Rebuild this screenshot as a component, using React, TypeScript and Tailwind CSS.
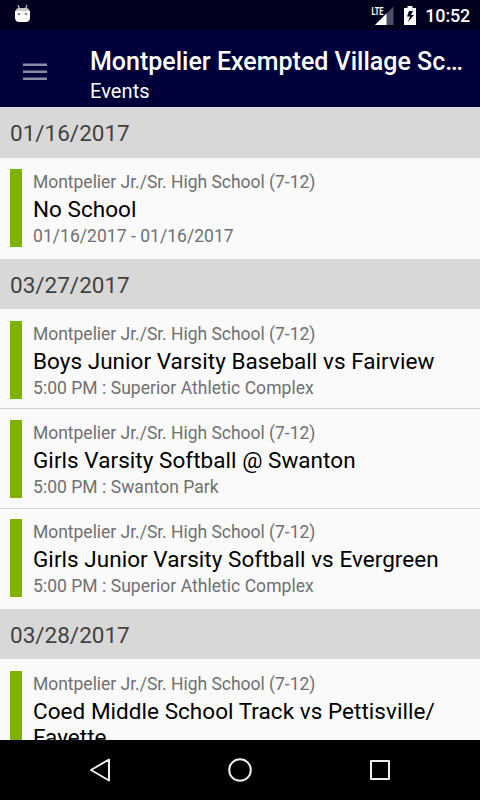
type EventItem = {
    school: string;
    title: string;
    detail: string;
};

type EventGroup = {
    date: string;
    events: EventItem[];
};

const SCHOOL = "Montpelier Jr./Sr. High School (7-12)";

const GROUPS: EventGroup[] = [
    {
        date: "01/16/2017",
        events: [{ school: SCHOOL, title: "No School", detail: "01/16/2017 - 01/16/2017" }],
    },
    {
        date: "03/27/2017",
        events: [
            { school: SCHOOL, title: "Boys Junior Varsity Baseball vs Fairview", detail: "5:00 PM : Superior Athletic Complex" },
            { school: SCHOOL, title: "Girls Varsity Softball @ Swanton", detail: "5:00 PM : Swanton Park" },
            { school: SCHOOL, title: "Girls Junior Varsity Softball vs Evergreen", detail: "5:00 PM : Superior Athletic Complex" },
        ],
    },
    {
        date: "03/28/2017",
        // zero-width space lets the title wrap after the slash
        events: [{ school: SCHOOL, title: "Coed Middle School Track vs Pettisville/\u200bFayette", detail: "" }],
    },
];

function StatusBar() {
    return (
        <div className="flex h-[30px] shrink-0 items-center bg-[#00001f] pr-[10px] pl-[15px] text-white">
            <svg className="-mt-[2px]" width="15" height="18" viewBox="0 0 15 18">
                <path d="M3 0l1.6 4M12 0l-1.6 4" stroke="#c8c8cc" strokeWidth="1.2" />
                <path d="M0.5 6Q1 3 4 3h7q3 0 3.5 3z" fill="#c8c8cc" />
                <path d="M0 6h15v7q-.5 4-4 4H4q-3.5 0-4-4z" fill="#fff" />
                <path d="M3 8h2v2H3zM10 8h2v2h-2z" fill="#77777f" />
            </svg>
            <div className="ml-auto flex items-center">
                <svg width="23" height="19" viewBox="0 0 23 19">
                    <path d="M4 19L22.5 .5V19z" fill="#4d4d62" />
                    <path d="M4 19L15.5 7.5V19z" fill="#fff" />
                    <path d="M0 0h13v9.5H0z" fill="#00001f" />
                    <text x="0.5" y="9" fontSize="11" fontWeight="700" fill="#fff" textLength="12" lengthAdjust="spacingAndGlyphs">LTE</text>
                </svg>
                <svg className="ml-[10px]" width="12" height="19" viewBox="0 0 12 19">
                    <path d="M3.5 0h5v2H12v17H0V2h3.5z" fill="#fff" />
                    <path d="M9 5H5L3 10.5h3L4 16l6-7H7z" fill="#00001f" />
                </svg>
                <span className="ml-[9px] pt-[2px] text-[18px] leading-[24px] font-medium tracking-[-0.2px]">10:52</span>
            </div>
        </div>
    );
}

function AppBar() {
    return (
        <header className="flex h-[77px] shrink-0 items-center bg-[#00003b] text-white">
            <svg className="mt-[7px] ml-[23px] shrink-0" width="24" height="18" viewBox="0 0 24 18" fill="#8c8ca8">
                <path d="M0 .5h24v2.5H0zM0 7.5h24V10H0zM0 14.5h24V17H0z" />
            </svg>
            <div className="ml-[43px] min-w-0 pt-[12px] pr-4">
                <h1 className="truncate text-[25px] leading-[32px] font-medium">Montpelier Exempted Village School District</h1>
                <p className="text-[20px] leading-[26px] tracking-[0.1px]">Events</p>
            </div>
        </header>
    );
}

function EventRow({ event }: { event: EventItem }) {
    return (
        <li className="flex border-t border-[#d3d3d3] pt-[10.3px] pb-[9.9px] pl-[10px] first:border-transparent last:pb-[11.6px]">
            <div className="w-[12px] shrink-0 bg-[#80b000]" />
            <div className="ml-[11px] min-h-[78px] min-w-0 pt-[2px] pr-[10px]">
                <p className="text-[17.5px] leading-[22px] tracking-[-0.02px] text-[#707070]">{event.school}</p>
                <p className="pt-[3px] text-[22.5px] leading-[26px] tracking-[0.04px] text-black">{event.title}</p>
                <p className="pt-[4.5px] text-[17.5px] leading-[20.5px] tracking-[0.04px] text-[#707070]">{event.detail}</p>
            </div>
        </li>
    );
}

function NavBar() {
    return (
        <nav className="flex h-[60px] shrink-0 items-center justify-center gap-[116px] bg-black">
            <svg width="24" height="24" viewBox="0 0 24 24" fill="none" stroke="#eee" strokeWidth="2" strokeLinejoin="round">
                <path d="M21 1.5v21L3 12z" />
            </svg>
            <svg width="24" height="24" viewBox="0 0 24 24" fill="none" stroke="#eee" strokeWidth="2">
                <circle cx="12" cy="12" r="10.8" />
            </svg>
            <svg width="24" height="24" viewBox="0 0 24 24" fill="none" stroke="#eee" strokeWidth="2" strokeLinejoin="round">
                <rect x="3" y="3" width="18" height="18" />
            </svg>
        </nav>
    );
}

export default function App() {
    return (
        <div className="flex h-[800px] w-[480px] flex-col overflow-hidden bg-[#fafafa] font-['Roboto',sans-serif]">
            <StatusBar />
            <AppBar />
            <main className="min-h-0 flex-1 overflow-hidden">
                {GROUPS.map((group) => (
                    <section key={group.date}>
                        <h2 className="h-[50.7px] bg-[#d8d8d8] pl-[10px] text-[22.5px] leading-[53.5px] text-[#424242]">{group.date}</h2>
                        <ul>
                            {group.events.map((event) => (
                                <EventRow key={event.title} event={event} />
                            ))}
                        </ul>
                    </section>
                ))}
            </main>
            <NavBar />
        </div>
    );
}
